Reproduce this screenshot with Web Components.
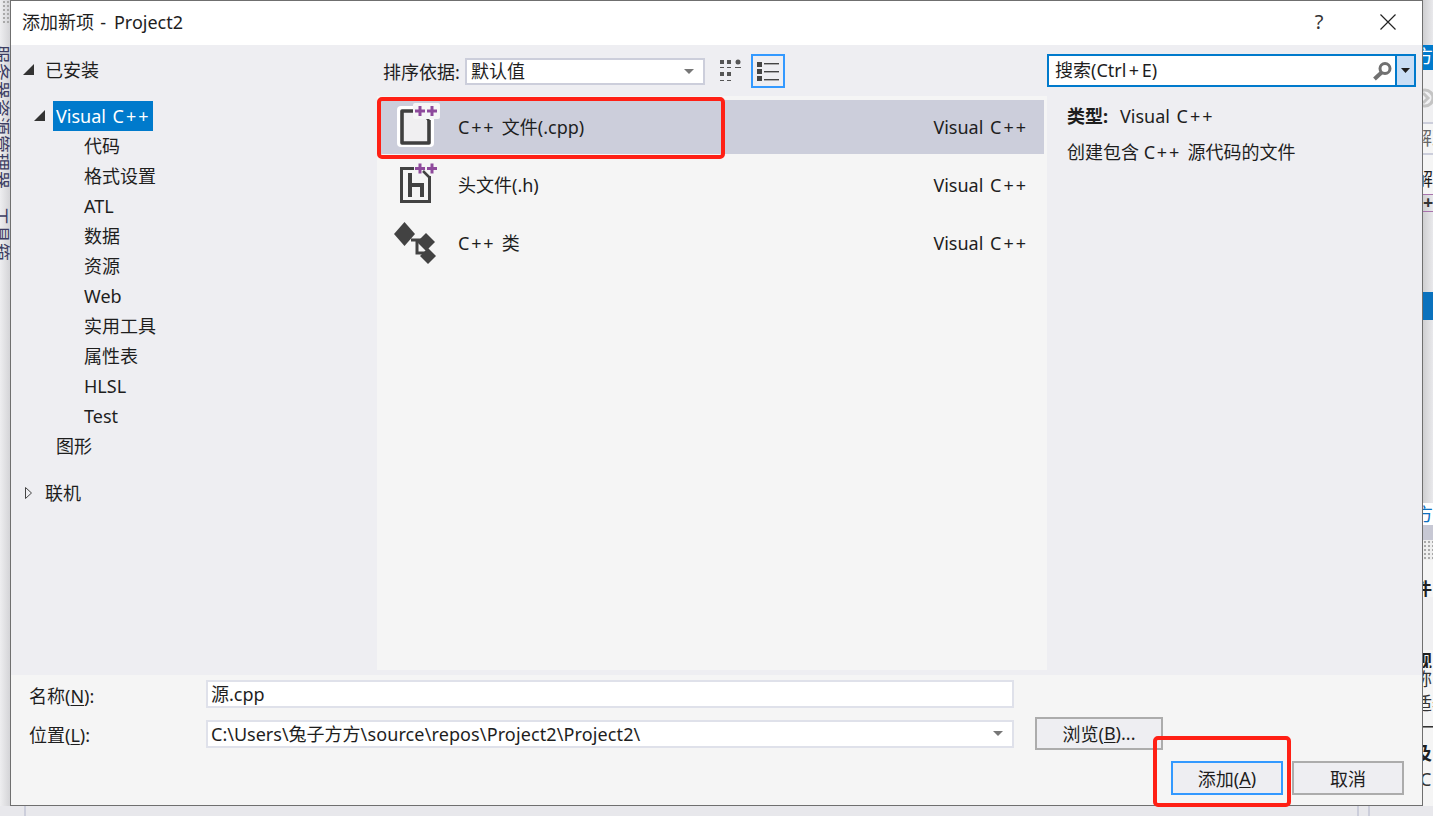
<!DOCTYPE html>
<html lang="zh-CN">
<head>
<meta charset="utf-8">
<title>添加新项 - Project2</title>
<style>
    html, body { margin: 0; height: 816px; overflow: hidden; background: #e4e4e8; }
    body { font-family: "Noto Sans", "Noto Sans CJK SC", sans-serif; font-size: 18px; color: #1e1e1e; }
    .pp { letter-spacing: 1.8px; }
</style>
</head>
<body>
<vs-desktop>
    <vs-dialog>
        <span slot="heading">添加新项<span style="letter-spacing:1.6px"> - </span>Project2</span>
        <vs-tree slot="tree">
            <vs-tree-item level="0" arrow="open">已安装</vs-tree-item>
            <vs-tree-item level="1" arrow="open" selected style="margin-top:16px">Visual<span class="pp" style="letter-spacing:2px"> C++</span></vs-tree-item>
            <vs-tree-item level="2">代码</vs-tree-item>
            <vs-tree-item level="2">格式设置</vs-tree-item>
            <vs-tree-item level="2">ATL</vs-tree-item>
            <vs-tree-item level="2">数据</vs-tree-item>
            <vs-tree-item level="2">资源</vs-tree-item>
            <vs-tree-item level="2">Web</vs-tree-item>
            <vs-tree-item level="2">实用工具</vs-tree-item>
            <vs-tree-item level="2">属性表</vs-tree-item>
            <vs-tree-item level="2">HLSL</vs-tree-item>
            <vs-tree-item level="2">Test</vs-tree-item>
            <vs-tree-item level="1">图形</vs-tree-item>
            <vs-tree-item level="0" arrow="closed" style="margin-top:17px">联机</vs-tree-item>
        </vs-tree>

        <vs-toolbar slot="toolbar"></vs-toolbar>

        <vs-template-list slot="list">
            <vs-template-row icon="cpp" selected><span class="pp">C++ </span>文件(.cpp)</vs-template-row>
            <vs-template-row icon="h">头文件(.h)</vs-template-row>
            <vs-template-row icon="class"><span class="pp">C++ </span>类</vs-template-row>
        </vs-template-list>

        <vs-details slot="details"></vs-details>

        <vs-footer slot="footer"></vs-footer>

        <vs-callout style="left:366px;top:96px;width:348px;height:62px"></vs-callout>
        <vs-callout style="left:1142px;top:735px;width:138px;height:71px"></vs-callout>
    </vs-dialog>
</vs-desktop>

<script>
class VsDesktop extends HTMLElement {
    constructor() {
        super();
        this.shadow = this.attachShadow({mode: 'open'});
        this.shadow.innerHTML = `<style>
            :host { display: flex; flex-flow: column; width: 1433px; height: 816px; }
            #row { display: flex; height: 806px; flex: none; }
            #left {
                width: 10px; flex: none; overflow: hidden;
                background: linear-gradient(90deg, #eeeef0 0%, #d4d4d7 100%);
                color: #3d3d62; font-size: 18px; line-height: 18px;
            }
            #grip {
                height: 45px; box-sizing: border-box; margin-left: 2px; border-bottom: 20px solid transparent;
                background-clip: padding-box;
                background-image: radial-gradient(#a9a9a9 1px, transparent 1px);
                background-size: 4px 4px;
            }
            .vert { writing-mode: vertical-rl; text-orientation: sideways; white-space: nowrap; margin-left: -8px; }
            #right {
                width: 10px; flex: none; overflow: hidden; display: flex; flex-flow: column;
                background: linear-gradient(90deg, #cfcfd1 0%, #e9e9ec 100%);
                font-size: 18px; line-height: 22px; white-space: nowrap; color: #1e1e1e;
            }
            #right div { flex: none; overflow: hidden; }
            #bottom { flex: 1; background: #e8e8ec; display: flex; }
            #bottom i { width: 2px; background: #cccedb; margin-left: 24px; }
            #bottom i + i { margin-left: 1331px; }
            #bottom i + i + i { margin-left: 9px; }
        </style>
        <div id="row">
            <div id="left">
                <div id="grip"></div>
                <div class="vert">服务器资源管理器</div>
                <div class="vert" style="margin-top:18px">工具箱</div>
            </div>
            <slot></slot>
            <div id="right">
                <div style="height:45px"></div>
                <div style="height:25px;background:#007acc;color:#fff;margin-left:-8px">方案</div>
                <div style="height:18px;background:#f0f0f2"></div>
                <div style="height:20px;background:#f0f0f2">
                    <svg width="10" height="20" viewBox="0 0 10 20" style="display:block"><circle cx="2" cy="10" r="8" fill="none" stroke="#c4c4c4" stroke-width="3"/><path d="M0 5l5 5-5 5" fill="none" stroke="#c4c4c4" stroke-width="3"/></svg>
                </div>
                <div style="height:14px;background:#f0f0f2"></div>
                <div style="height:33px;background:#f5f5f5;color:#666;margin-left:-9px;border-top:2px solid #cccedb;border-bottom:2px solid #cccedb;box-sizing:border-box;line-height:29px">解决</div>
                <div style="height:13px;background:#f5f5f5"></div>
                <div style="height:22px;margin-left:-8px;background:#f5f5f5">解</div>
                <div style="height:4px;background:#f5f5f5"></div>
                <div style="height:18px;border-top:1px solid #a873ac;border-bottom:1px solid #a873ac;box-sizing:border-box;color:#333;font-weight:700;line-height:14px">+</div>
                <div style="height:80px"></div>
                <div style="height:28px;background:#0a71bd"></div>
                <div style="height:183px"></div>
                <div style="height:22px;background:#fff;color:#0e70c0;margin-left:-8px">方案</div>
                <div style="height:15px;background:#c7c8d4"></div>
                <div style="height:20px;background-color:#eee;background-image:radial-gradient(#a9a9a9 1px,transparent 1px);background-size:4px 4px"></div>
                <div style="height:18px;background:#f5f5f5"></div>
                <div style="height:19px;font-weight:700;margin-left:-9px;background:#f5f5f5">件</div>
                <div style="height:53px;background:#f0f0f2"></div>
                <div style="height:18px;font-weight:700;margin-left:-9px;background:#f5f5f5">规</div>
                <div style="height:24px;color:#333;margin-left:-9px;background:#f5f5f5">称</div>
                <div style="height:24px;color:#333;margin-left:-9px;background:#f5f5f5">适器</div>
                <div style="height:26px;color:#333;margin-left:-5px;background:#f5f5f5">一相</div>
                <div style="height:26px;font-weight:700;margin-left:-9px;background:#f5f5f5">及</div>
                <div style="height:38px;color:#333;margin-left:-3px;background:#f5f5f5">C</div>
            </div>
        </div>
        <div id="bottom"><i></i><i></i><i></i></div>`;
    }
}
customElements.define('vs-desktop', VsDesktop);

class VsDialog extends HTMLElement {
    constructor() {
        super();
        this.shadow = this.attachShadow({mode: 'open'});
        this.shadow.innerHTML = `<style>
            :host {
                display: flex; flex-flow: column; flex: none; position: relative;
                width: 1413px; height: 806px; box-sizing: border-box;
                border: 1px solid #6f6f6f; background: #eeeef2;
            }
            header {
                height: 44px; box-sizing: border-box; flex: none; background: #fff; display: flex; align-items: center;
                padding: 0 0 4px 11px; font-size: 18px; color: #1e1e1e;
            }
            #title { flex: 1; white-space: nowrap; }
            #help { font-size: 20px; width: 20px; text-align: center; margin-right: 51px; color: #333; }
            #close { width: 16px; height: 16px; margin-right: 26px; margin-top: 2px; }
            main {
                flex: none; height: 630px;
                display: grid; grid-template-columns: 366px 670px 1fr; grid-template-rows: 51px 574px;
            }
            ::slotted([slot=tree]) { grid-row: 1 / 3; }
            ::slotted([slot=details]) { grid-row: 1 / 3; grid-column: 3; }
            ::slotted([slot=toolbar]) { grid-column: 2; grid-row: 1; }
            ::slotted([slot=list]) { grid-column: 2; grid-row: 2; }
        </style>
        <header>
            <div id="title"><slot name="heading"></slot></div>
            <div id="help">?</div>
            <svg id="close" viewBox="0 0 16 16"><path d="M.5.5l15 15M15.5.5l-15 15" stroke="#222" stroke-width="1.2" fill="none"/></svg>
        </header>
        <main>
            <slot name="tree"></slot>
            <slot name="toolbar"></slot>
            <slot name="list"></slot>
            <slot name="details"></slot>
        </main>
        <slot name="footer"></slot>
        <slot></slot>`;
    }
}
customElements.define('vs-dialog', VsDialog);

class VsTree extends HTMLElement {
    constructor() {
        super();
        this.shadow = this.attachShadow({mode: 'open'});
        this.shadow.innerHTML = `<style>
            :host { display: flex; flex-flow: column; align-items: flex-start; padding-top: 10px; }
        </style><slot></slot>`;
    }
}
customElements.define('vs-tree', VsTree);

class VsTreeItem extends HTMLElement {
    constructor() {
        super();
        this.shadow = this.attachShadow({mode: 'open'});
        const level = Number(this.getAttribute('level'));
        const arrow = this.getAttribute('arrow');
        const selected = this.hasAttribute('selected');
        const labelLeft = [34, 45, 73][level] - (selected ? 3 : 0);
        const arrowLeft = [12, 23, 0][level];
        let glyph = '';
        if (arrow === 'open') {
            glyph = '<polygon points="11,0 11,11 0,11" fill="#333"/>';
        } else if (arrow === 'closed') {
            glyph = '<polygon points="2.5,.5 8.5,6 2.5,11.5" fill="none" stroke="#444"/>';
        }
        const gap = arrow ? labelLeft - arrowLeft - 11 : labelLeft;
        this.shadow.innerHTML = `<style>
            :host { display: flex; align-items: center; height: 30px; line-height: 30px; white-space: nowrap; }
            svg { width: 11px; height: 12px; margin-left: ${arrowLeft}px; flex: none; }
            #label { margin-left: ${gap}px; }
            :host([selected]) #label { background: #007acc; color: #fff; width: 100px; box-sizing: border-box; padding-left: 3px; }
        </style>
        ${arrow ? `<svg viewBox="0 0 11 12">${glyph}</svg>` : ''}
        <div id="label"><slot></slot></div>`;
    }
}
customElements.define('vs-tree-item', VsTreeItem);

class VsToolbar extends HTMLElement {
    constructor() {
        super();
        this.shadow = this.attachShadow({mode: 'open'});
        this.shadow.innerHTML = `<style>
            :host { display: flex; align-items: center; padding-left: 6px; }
            #label { width: 82px; flex: none; white-space: nowrap; padding-top: 1px; }
            #select {
                width: 240px; height: 27px; box-sizing: border-box; background: #fff;
                border: 2px solid #cccedb; display: flex; align-items: center;
                padding: 0 9px 0 4px; line-height: 23px; margin-top: 1px;
            }
            #select span { flex: 1; }
            #grid { width: 21px; height: 23px; margin-left: 15px; flex: none; }
            #list {
                width: 34px; height: 34px; box-sizing: border-box; border: 2px solid #3399ff;
                margin-left: 10px; flex: none; display: flex; align-items: center; justify-content: center;
            }
            #list svg { width: 22px; height: 20px; }
        </style>
        <div id="label">排序依据:</div>
        <div id="select"><span>默认值</span>
            <svg width="10" height="5" viewBox="0 0 10 5"><polygon points="0,0 10,0 5,5" fill="#777"/></svg>
        </div>
        <svg id="grid" viewBox="0 0 21 23" fill="#555">
            <rect x="0" y="1" width="4" height="4"/><rect x="7" y="1" width="4" height="4"/><circle cx="18" cy="3" r="2.5"/>
            <rect x="0" y="8" width="4" height="1"/><rect x="7" y="8" width="4" height="1"/><rect x="15" y="8" width="6" height="1"/>
            <rect x="0" y="13" width="4" height="4"/><rect x="7" y="13" width="4" height="4"/>
            <rect x="0" y="21" width="4" height="1"/><rect x="7" y="21" width="4" height="1"/>
        </svg>
        <div id="list">
            <svg viewBox="0 0 22 20" fill="#444">
                <rect x="0" y="1" width="5" height="5"/><rect x="7" y="2" width="15" height="1.4"/>
                <rect x="0" y="8" width="5" height="5"/><rect x="7" y="10" width="15" height="1.4"/>
                <rect x="0" y="15" width="5" height="5"/><rect x="7" y="18" width="15" height="1.4"/>
            </svg>
        </div>`;
    }
}
customElements.define('vs-toolbar', VsToolbar);

class VsTemplateList extends HTMLElement {
    constructor() {
        super();
        this.shadow = this.attachShadow({mode: 'open'});
        this.shadow.innerHTML = `<style>
            :host { display: flex; flex-flow: column; background: #f5f5f5; padding: 4px 3px 0 1px; gap: 4px; }
        </style><slot></slot>`;
    }
}
customElements.define('vs-template-list', VsTemplateList);

class VsTemplateRow extends HTMLElement {
    constructor() {
        super();
        this.shadow = this.attachShadow({mode: 'open'});
        this.shadow.innerHTML = `<style>
            :host { display: flex; align-items: center; height: 54px; }
            :host([selected]) { background: #cccedb; }
            svg { width: 50px; height: 54px; margin-left: 12px; flex: none; }
            #name { margin-left: 18px; flex: 1; white-space: nowrap; padding-bottom: 2px; }
            #kind { margin-right: 16px; white-space: nowrap; }
            #kind span { letter-spacing: 2px; }
        </style>
        ${this.icon(this.getAttribute('icon'))}
        <div id="name"><slot></slot></div>
        <div id="kind">Visual<span> C++</span></div>`;
    }

    icon(name) {
        const plus = (x, y) => `<path d="M${x - 5} ${y}h10M${x} ${y - 5}v10" stroke="#8e4a9c" stroke-width="3" fill="none"/>`;
        if (name === 'cpp') {
            return `<svg viewBox="0 0 50 54">
                <rect x="7" y="6" width="37" height="41" rx="4" fill="#fff"/>
                <path d="M12 11H30L39 20V43H12Z" fill="#f0eff1"/>
                <path d="M26 11H12V43H39V20" fill="none" stroke="#3f3f3f" stroke-width="3.6" stroke-linejoin="round"/>
                <path d="M32 13l7 7" stroke="#3f3f3f" stroke-width="3"/>
                <rect x="23" y="3" width="27" height="16" rx="2" fill="#f6f6f6"/>
                ${plus(30, 11)}${plus(42, 11)}
            </svg>`;
        }
        if (name === 'h') {
            return `<svg viewBox="0 0 50 54">
                <path d="M24 10.5H11.5V43.5H39.5V18" fill="none" stroke="#424242" stroke-width="3"/>
                <path d="M33 13l6 6" stroke="#424242" stroke-width="2.5"/>
                <path d="M20 15V39M20 27H32V39" fill="none" stroke="#424242" stroke-width="4"/>
                ${plus(30, 10.5)}${plus(42, 10.5)}
            </svg>`;
        }
        return `<svg viewBox="0 0 50 54" fill="#424242">
            <path d="M14.5 6L25 18 14.5 30 4 18z"/>
            <path d="M21 24H36M27 24V37H36" stroke="#424242" stroke-width="3" fill="none"/>
            <path d="M36 17L45 26 36 35 27 26z"/>
            <path d="M38 32L46 40 38 48 30 40z"/>
        </svg>`;
    }
}
customElements.define('vs-template-row', VsTemplateRow);

class VsDetails extends HTMLElement {
    constructor() {
        super();
        this.shadow = this.attachShadow({mode: 'open'});
        this.shadow.innerHTML = `<style>
            :host { display: flex; flex-flow: column; padding: 9px 6px 0 0; }
            #search {
                height: 33px; box-sizing: border-box; border: 2px solid #007acc; background: #fff;
                display: flex; align-items: center; padding-left: 6px; line-height: 29px;
            }
            #search span { flex: 1; white-space: nowrap; }
            #search span i { font-style: normal; margin: 0 2.5px; }
            #search svg { width: 20px; height: 20px; margin-right: 3px; flex: none; }
            #drop {
                width: 19px; height: 29px; flex: none; background: #c9def5; border-left: 2px solid #007acc;
                display: flex; align-items: center; justify-content: center; box-sizing: border-box;
            }
            #info { padding: 14px 0 0 20px; }
            #type { height: 30px; line-height: 30px; display: flex; white-space: nowrap; }
            #type b { font-weight: 700; width: 53px; }
            #desc { height: 30px; line-height: 30px; margin-top: 6px; white-space: nowrap; }
            .pp { letter-spacing: 2px; }
            #desc .pp { letter-spacing: 1.8px; }
        </style>
        <div id="search">
            <span>搜索(Ctrl<i>+</i>E)</span>
            <svg viewBox="0 0 20 20"><circle cx="13" cy="7.5" r="5" fill="none" stroke="#717171" stroke-width="3"/><path d="M9.5 11.5L2.5 18" stroke="#717171" stroke-width="4"/></svg>
            <div id="drop"><svg style="width:9px;height:5px;margin:0" viewBox="0 0 9 5"><polygon points="0,0 9,0 4.5,5" fill="#1e1e1e"/></svg></div>
        </div>
        <div id="info">
            <div id="type"><b>类型:</b><span>Visual<span class="pp"> C++</span></span></div>
            <div id="desc">创建包含 <span class="pp">C++ </span>源代码的文件</div>
        </div>`;
    }
}
customElements.define('vs-details', VsDetails);

class VsButton extends HTMLElement {
    constructor() {
        super();
        this.shadow = this.attachShadow({mode: 'open'});
        this.shadow.innerHTML = `<style>
            :host {
                display: flex; align-items: center; justify-content: center; box-sizing: border-box;
                background: #eeeef2; border: 2px solid #acacac; white-space: pre; height: 34px; padding-bottom: 1px;
            }
            :host([primary]) { border-color: #3399ff; }
        </style><slot></slot>`;
    }
}
customElements.define('vs-button', VsButton);

class VsFooter extends HTMLElement {
    constructor() {
        super();
        this.shadow = this.attachShadow({mode: 'open'});
        this.shadow.innerHTML = `<style>
            :host { display: flex; flex-flow: column; flex: 1; background: #f5f5f5; padding: 5px 18px 0 18px; }
            #form { display: grid; grid-template-columns: 177px 808px 149px; row-gap: 9px; align-items: center; }
            .label { padding-top: 1px; }
            .field {
                height: 28px; box-sizing: border-box; border: 2px solid #dfe1ea; background: #fff;
                display: flex; align-items: center; padding: 0 9px 0 3px; line-height: 24px; white-space: nowrap;
            }
            .field span { flex: 1; }
            .field i { font-style: normal; letter-spacing: .12px; }
            #form vs-button { margin-left: 21px; height: 33px; }
            #actions { display: flex; justify-content: flex-end; gap: 9px; margin-top: 11px; }
            #actions vs-button { width: 112px; }
            u { text-underline-offset: 2px; }
        </style>
        <div id="form">
            <div class="label">名称(<u>N</u>):</div>
            <div class="field"><span>源.cpp</span></div>
            <div></div>
            <div class="label">位置(<u>L</u>):</div>
            <div class="field"><span>C:\\Users\\兔子方方<i>\\source\\repos\\Project2\\Project2\\</i></span>
                <svg width="10" height="5" viewBox="0 0 10 5"><polygon points="0,0 10,0 5,5" fill="#777"/></svg>
            </div>
            <vs-button>浏览(<u>B</u>)...</vs-button>
        </div>
        <div id="actions">
            <vs-button primary>添加(<u>A</u>)</vs-button>
            <vs-button>取消</vs-button>
        </div>`;
    }
}
customElements.define('vs-footer', VsFooter);

// red annotation boxes drawn over the screenshot
class VsCallout extends HTMLElement {
    constructor() {
        super();
        this.shadow = this.attachShadow({mode: 'open'});
        this.shadow.innerHTML = `<style>
            :host {
                display: block; position: absolute; box-sizing: border-box;
                border: 4px solid #ff2015; border-radius: 5px; pointer-events: none;
            }
        </style>`;
    }
}
customElements.define('vs-callout', VsCallout);
</script>
</body>
</html>
